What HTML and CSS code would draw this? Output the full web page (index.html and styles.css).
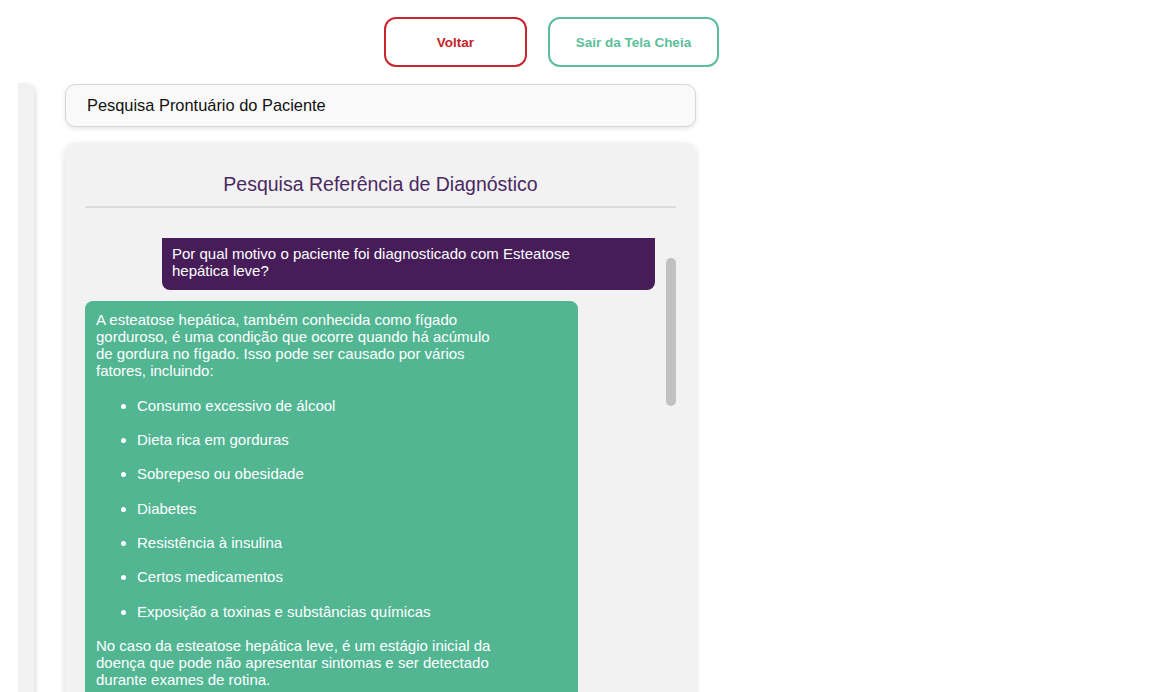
FILE: index.html
```html
<!DOCTYPE html>
<html lang="pt-BR">
<head>
<meta charset="utf-8">
<title>Pesquisa Referência de Diagnóstico</title>
<link rel="stylesheet" href="styles.css">
</head>
<body>
<div class="topbar">
  <button class="btn btn-back">Voltar</button>
  <button class="btn btn-exit">Sair da Tela Cheia</button>
</div>
<div class="layout">
  <aside class="sidebar"></aside>
  <main class="content">
    <div class="search">Pesquisa Prontuário do Paciente</div>
    <section class="panel">
      <h2 class="panel-title">Pesquisa Referência de Diagnóstico</h2>
      <hr class="divider">
      <div class="chat">
        <div class="messages">
          <div class="msg msg-q">
            <p class="msg-text">Por qual motivo o paciente foi diagnosticado com Esteatose hepática leve?</p>
          </div>
          <div class="msg msg-a">
            <div class="msg-text">
              <p>A esteatose hepática, também conhecida como fígado gorduroso, é uma condição que ocorre quando há acúmulo de gordura no fígado. Isso pode ser causado por vários fatores, incluindo:</p>
              <ul class="causes">
                <li>Consumo excessivo de álcool</li>
                <li>Dieta rica em gorduras</li>
                <li>Sobrepeso ou obesidade</li>
                <li>Diabetes</li>
                <li>Resistência à insulina</li>
                <li>Certos medicamentos</li>
                <li>Exposição a toxinas e substâncias químicas</li>
              </ul>
              <p>No caso da esteatose hepática leve, é um estágio inicial da doença que pode não apresentar sintomas e ser detectado durante exames de rotina.</p>
            </div>
          </div>
        </div>
        <div class="scroll-thumb"></div>
      </div>
    </section>
  </main>
</div>
</body>
</html>
```

FILE: styles.css
```css
html, body {
  margin: 0;
  padding: 0;
  background: #ffffff;
  font-family: "Liberation Sans", Arial, sans-serif;
  overflow: hidden;
  height: 692px;
}

.topbar {
  display: flex;
  justify-content: flex-end;
  gap: 21px;
  width: 719px;
  padding-top: 17px;
}

.btn {
  box-sizing: border-box;
  height: 50px;
  background: #ffffff;
  border-radius: 12px;
  font-family: "Liberation Sans", Arial, sans-serif;
  font-size: 13.5px;
  font-weight: bold;
  cursor: pointer;
}

.btn-back {
  width: 143px;
  border: 2px solid #c8262e;
  color: #c41e28;
}

.btn-exit {
  width: 171px;
  border: 2px solid #5bbf9b;
  color: #5bbf9b;
}

.layout {
  display: flex;
  margin-top: 16px;
}

.sidebar {
  margin-left: 18px;
  width: 16px;
  height: 700px;
  background: #f2f2f2;
  border-radius: 0 8px 0 0;
  box-shadow: 2px 2px 4px rgba(0, 0, 0, 0.12);
}

.content {
  margin-left: 31px;
  width: 631px;
}

.search {
  box-sizing: border-box;
  margin-top: 1px;
  height: 43px;
  padding: 0 21px;
  display: flex;
  align-items: center;
  background: #f9f9f9;
  border: 1px solid #d6d6d6;
  border-radius: 10px;
  box-shadow: 0 2px 4px rgba(0, 0, 0, 0.1);
  font-size: 16.4px;
  color: #111111;
}

.panel {
  margin-top: 16px;
  padding: 20px 20px 0;
  background: #f2f2f2;
  border-radius: 10px;
  box-shadow: 0 2px 6px rgba(0, 0, 0, 0.15);
  height: 600px;
}

.panel-title {
  margin: 10px 0;
  font-size: 19.5px;
  line-height: 23px;
  font-weight: normal;
  text-align: center;
  color: #4b2863;
}

.divider {
  margin: 0;
  border: 0;
  border-top: 2px solid #dcdcdc;
}

.chat {
  position: relative;
  margin-top: 30px;
  height: 520px;
  overflow: hidden;
}

.messages {
  display: flex;
  flex-direction: column;
  align-items: flex-start;
  gap: 11px;
  padding-right: 21px;
}

.msg {
  box-sizing: border-box;
  width: 493px;
  color: #ffffff;
  font-size: 15px;
  line-height: 17.25px;
}

.msg-text {
  max-width: 400px;
  margin: 0;
}

.msg-text p {
  margin: 0;
}

.msg-q {
  align-self: flex-end;
  background: #461d59;
  padding: 7px 10px 10px;
  border-radius: 0 0 8px 8px;
}

.msg-a {
  background: #52b693;
  padding: 10px 11px 20px;
  border-radius: 8px;
}

.causes {
  margin: 17px 0;
  padding-left: 41px;
}

.causes li + li {
  margin-top: 17.1px;
}

.scroll-thumb {
  position: absolute;
  right: 0;
  top: 20px;
  width: 10px;
  height: 148px;
  background: #c1c1c1;
  border-radius: 5px;
}
```
